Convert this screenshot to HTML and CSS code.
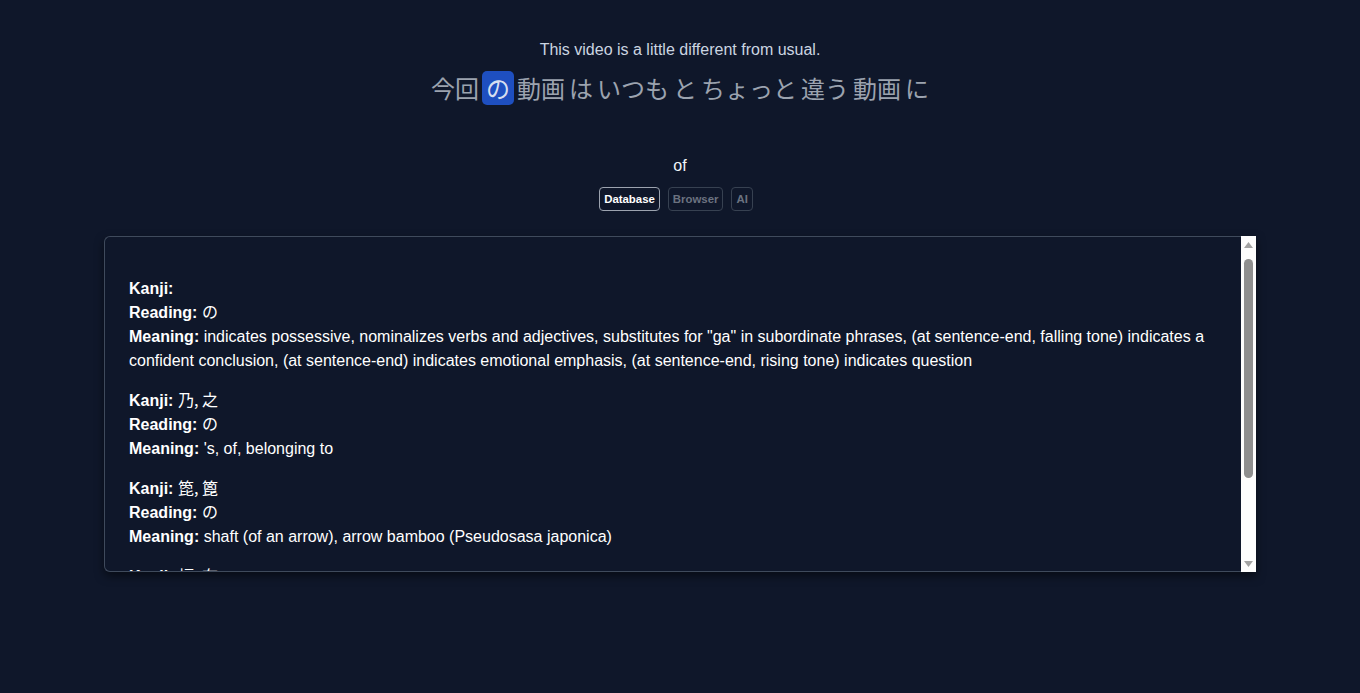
FILE: index.html
```html
<!DOCTYPE html>
<html lang="en">
<head>
<meta charset="utf-8">
<title>Subtitle lookup</title>
<link rel="stylesheet" href="styles.css">
</head>
<body>
<main class="page">
  <section class="caption">
    <p class="translation">This video is a little different from usual.</p>
    <p class="sentence">
      <span class="token">今回</span><span class="token active">の</span><span class="token">動画</span><span class="token">は</span><span class="token">いつも</span><span class="token">と</span><span class="token">ちょっと</span><span class="token">違う</span><span class="token">動画</span><span class="token">に</span>
    </p>
  </section>
  <section class="lookup">
    <p class="gloss">of</p>
    <div class="sources">
      <button class="source selected">Database</button>
      <button class="source">Browser</button>
      <button class="source">AI</button>
    </div>
  </section>
  <section class="results">
    <div class="results-body">
      <p class="entry"><b>Kanji:</b> <br><b>Reading:</b> <span class="jp">の</span><br><b>Meaning:</b> indicates possessive, nominalizes verbs and adjectives, substitutes for "ga" in subordinate phrases, (at sentence-end, falling tone) indicates a confident conclusion, (at sentence-end) indicates emotional emphasis, (at sentence-end, rising tone) indicates question</p>
      <p class="entry"><b>Kanji:</b> <span class="jp">乃, 之</span><br><b>Reading:</b> <span class="jp">の</span><br><b>Meaning:</b> 's, of, belonging to</p>
      <p class="entry"><b>Kanji:</b> <span class="jp">箆, 篦</span><br><b>Reading:</b> <span class="jp">の</span><br><b>Meaning:</b> shaft (of an arrow), arrow bamboo (Pseudosasa japonica)</p>
      <p class="entry"><b>Kanji:</b> <span class="jp">幅, 布</span><br><b>Reading:</b> <span class="jp">の</span><br><b>Meaning:</b> counter for units of cloth width</p>
    </div>
    <div class="scrollbar" aria-hidden="true">
      <div class="sb-button">
        <svg width="9" height="6" viewBox="0 0 9 6"><polygon points="0,6 9,6 4.5,0" fill="#a3a3a3"/></svg>
      </div>
      <div class="sb-track"><div class="sb-thumb"></div></div>
      <div class="sb-button">
        <svg width="9" height="6" viewBox="0 0 9 6"><polygon points="0,0 9,0 4.5,6" fill="#a3a3a3"/></svg>
      </div>
    </div>
  </section>
</main>
</body>
</html>
```
FILE: styles.css
```css
html, body {
  margin: 0;
  padding: 0;
  background: #0f172a;
  height: 100%;
}
body {
  font-family: "Liberation Sans", Arial, "Noto Sans CJK JP", sans-serif;
  color: #ffffff;
}
.page {
  max-width: 1152px;
  margin: 0 auto;
  padding-top: 38px;
}
.caption {
  display: flex;
  flex-direction: column;
  align-items: center;
}
.translation {
  margin: 0;
  font-size: 16px;
  line-height: 24px;
  color: #cbd5e1;
}
.sentence {
  margin: 9px 0 0;
  display: flex;
  align-items: center;
  font-family: "Noto Sans CJK JP", sans-serif;
  font-size: 24px;
  line-height: 34px;
  color: #9ca3af;
}
.token {
  padding: 0 2px;
  border-radius: 5px;
}
.token.active {
  background: #1e4fc0;
  color: #d6def0;
  padding: 0 4px;
  margin: 0 1px;
}
.lookup {
  display: flex;
  flex-direction: column;
  align-items: center;
  margin-top: 49px;
}
.gloss {
  margin: 0;
  font-size: 16px;
  line-height: 24px;
  color: #f1f5f9;
}
.sources {
  display: flex;
  gap: 8px;
  margin-top: 9px;
  margin-right: 8px;
}
.source {
  font-family: "Liberation Sans", Arial, sans-serif;
  font-weight: bold;
  font-size: 11.4px;
  line-height: 16px;
  padding: 3px 4px;
  border-radius: 4px;
  background: transparent;
  border: 1px solid #374151;
  color: #6b7280;
}
.source.selected {
  border-color: #9ca3af;
  color: #ffffff;
}
.results {
  margin-top: 25px;
  height: 334px;
  display: flex;
  border: 1px solid #3f4a5c;
  border-right: 0;
  border-radius: 6px 0 0 6px;
  box-shadow: 0 4px 10px rgba(0, 0, 0, 0.5);
  font-size: 16px;
  line-height: 24px;
}
.results-body {
  flex: 1;
  overflow: hidden;
  padding: 0 24px;
}
.scrollbar {
  width: 15px;
  margin: -1px 0;
  background: #fdfdfd;
  display: flex;
  flex-direction: column;
}
.sb-button {
  height: 17px;
  display: flex;
  align-items: center;
  justify-content: center;
}
.sb-track {
  flex: 1;
  padding: 6px 3px 0;
}
.sb-thumb {
  height: 219px;
  background: #8f8f8f;
  border-radius: 5px;
}
.entry {
  margin: 16px 0;
}
.entry:first-child {
  margin-top: 40px;
}
.jp {
  font-family: "Noto Sans CJK JP", sans-serif;
  line-height: 1;
}
```
